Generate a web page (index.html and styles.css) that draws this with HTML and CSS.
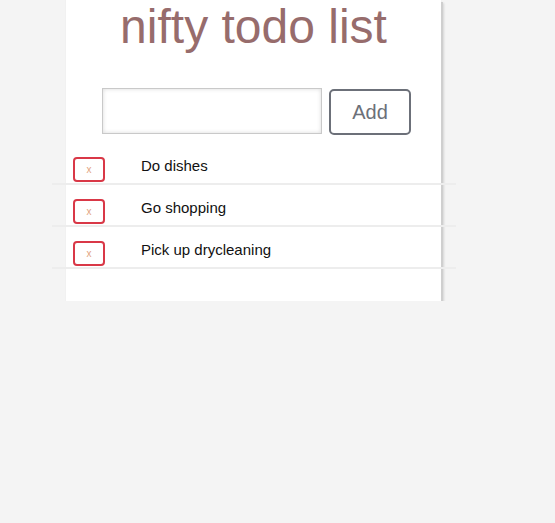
FILE: index.html
```html
<!DOCTYPE html>
<html>
<head>
<meta charset="utf-8">
<title>nifty todo list</title>
<link rel="stylesheet" href="styles.css">
</head>
<body>
<div class="card">
  <h1 class="title">nifty todo list</h1>
  <form class="add-form">
    <input class="add-input" type="text">
    <button class="add-btn" type="button">Add</button>
  </form>
  <ul class="todos">
    <li class="todo"><button class="del" type="button">x</button><span class="todo-text">Do dishes</span></li>
    <li class="todo"><button class="del" type="button">x</button><span class="todo-text">Go shopping</span></li>
    <li class="todo"><button class="del" type="button">x</button><span class="todo-text">Pick up drycleaning</span></li>
  </ul>
</div>
</body>
</html>
```
FILE: styles.css
```css
html, body {
  margin: 0;
  padding: 0;
  background: #f4f4f4;
  font-family: "Liberation Sans", Arial, sans-serif;
}
.card {
  width: 375px;
  margin-left: 66px;
  background: #fff;
  padding-bottom: 32px;
  box-shadow: 2px 2px 0 #cfcfcf, 3px 3px 2px rgba(0, 0, 0, 0.12), 0 0 1px rgba(0, 0, 0, 0.08);
}
.title {
  margin: 0;
  padding-top: 0;
  font-size: 48px;
  line-height: 55px;
  font-weight: normal;
  text-align: center;
  color: #976c6c;
  position: relative;
  top: -1px;
}
.add-form {
  display: flex;
  align-items: flex-start;
  gap: 7px;
  margin: 33px 0 0 36px;
}
.add-input {
  box-sizing: border-box;
  width: 220px;
  height: 46px;
  margin: 0;
  border: 1px solid #c9c9c9;
  box-shadow: inset 0 0 4px rgba(0, 0, 0, 0.15);
  background: #fff;
  outline: none;
}
.add-btn {
  box-sizing: border-box;
  width: 82px;
  height: 46px;
  margin: 1px 0 0 0;
  border: 2px solid #6c7079;
  border-radius: 5px;
  background: #fff;
  color: #6c7079;
  font-family: "Liberation Sans", Arial, sans-serif;
  font-size: 20px;
  padding: 0;
}
.todos {
  list-style: none;
  margin: 8px -15px 0 -14px;
  padding: 0;
}
.todo {
  display: flex;
  align-items: flex-start;
  padding: 14px 0 1px 21px;
  border-bottom: 2px solid #ededed;
}
.del {
  box-sizing: border-box;
  width: 32px;
  height: 25px;
  margin: 0;
  padding: 0;
  border: 2px solid #d93847;
  border-radius: 4px;
  background: #fff;
  color: #e2a37f;
  font-family: "Liberation Sans", Arial, sans-serif;
  font-size: 10px;
  line-height: 20px;
}
.todo-text {
  margin-left: 36px;
  font-size: 15px;
  line-height: 17px;
  color: #111;
}
```
